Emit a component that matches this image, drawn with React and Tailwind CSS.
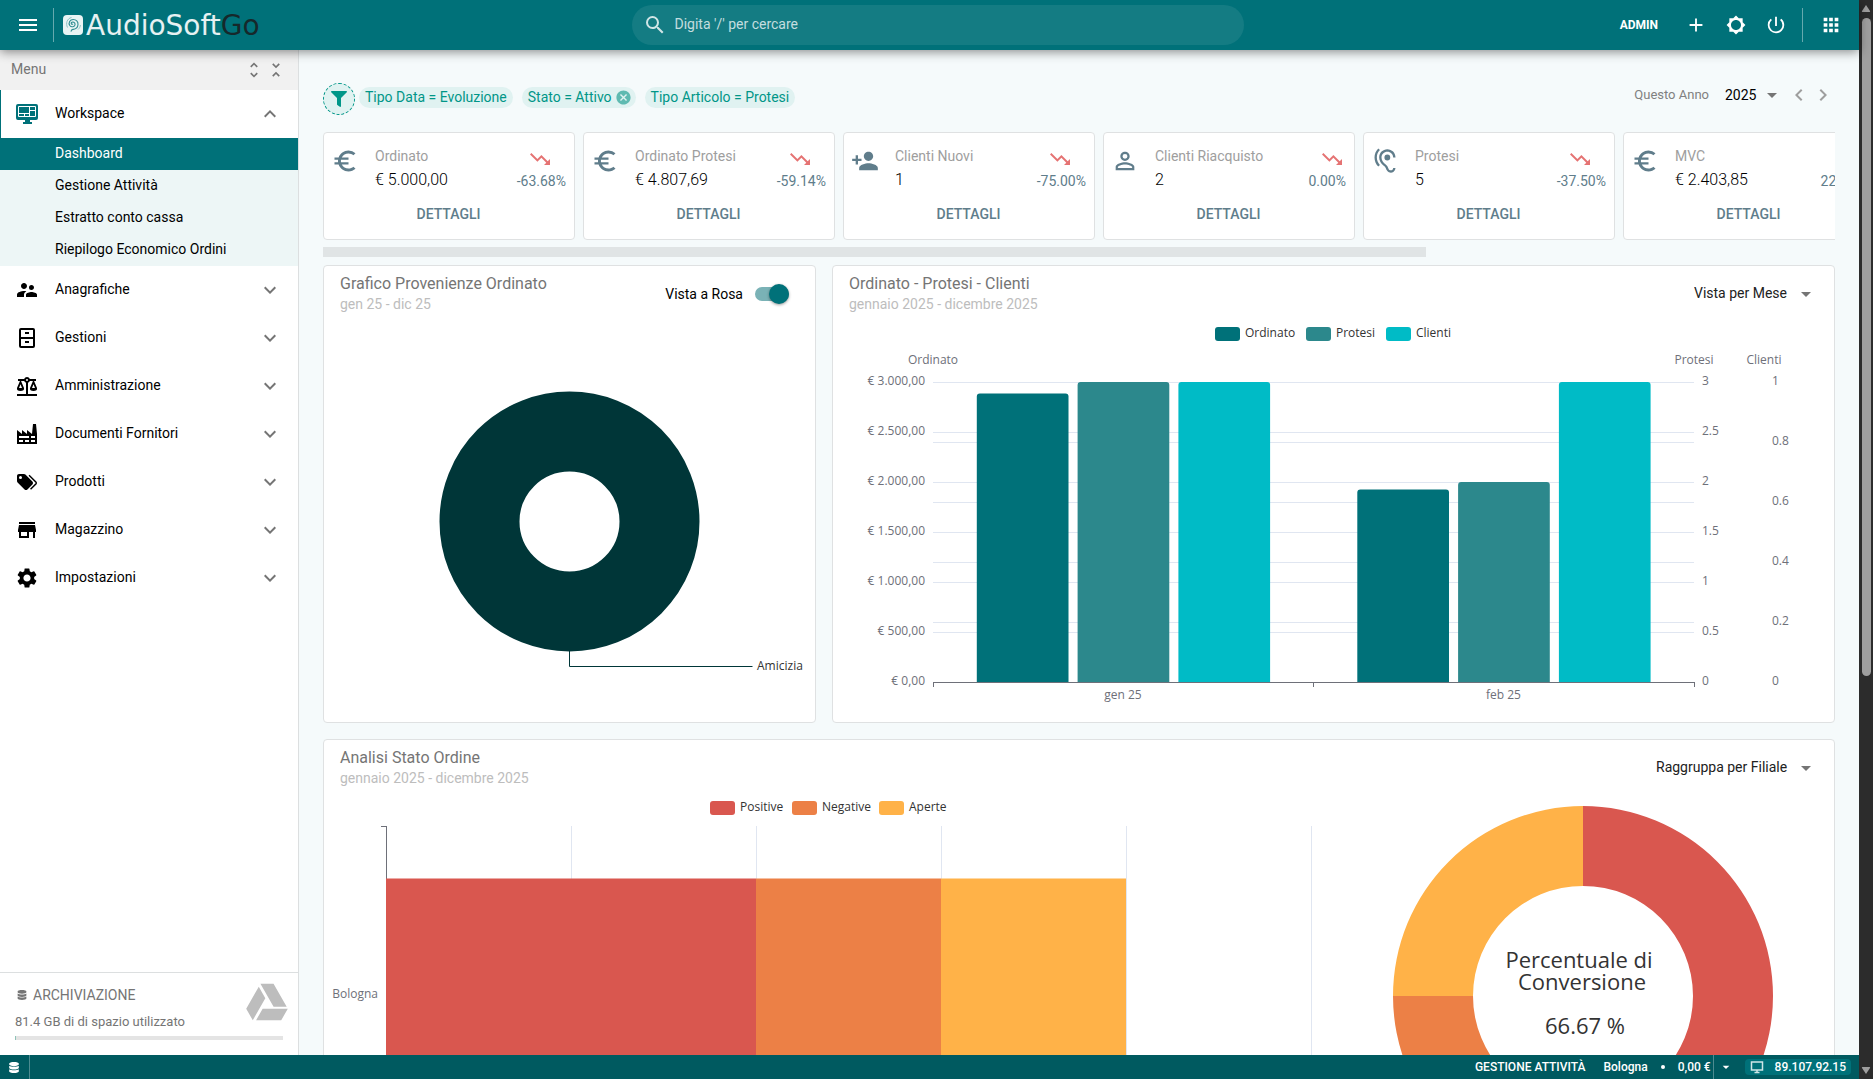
import React from 'react'
import {
  MdMenu, MdSearch, MdAdd, MdBrightness5, MdPowerSettingsNew, MdApps, MdUnfoldMore, MdUnfoldLess,
  MdExpandMore, MdExpandLess, MdSupervisorAccount, MdStore, MdSettings, MdCancel, MdArrowDropDown,
  MdChevronLeft, MdChevronRight, MdEuroSymbol, MdPersonAdd, MdPersonOutline, MdHearing,
  MdTrendingDown, MdTrendingUp
} from 'react-icons/md'
import { FaDatabase, FaFilter } from 'react-icons/fa'

const chartFont = { fontFamily: '"Open Sans", "Noto Sans", sans-serif' }

const Glyph = ({ d, className }) => (
  <svg viewBox="0 0 24 24" className={className} fill="currentColor" aria-hidden="true">
    <path d={d} />
  </svg>
)

const MonitorIcon = ({ className }) => (
  <svg viewBox="0 0 24 24" className={className} aria-hidden="true">
    <path d="M3 2h18a2 2 0 0 1 2 2v12a2 2 0 0 1-2 2h-6v2h2v2H8v-2h2v-2H3a2 2 0 0 1-2-2V4a2 2 0 0 1 2-2z" fill="#007179" />
    <path d="M3.500 4.500h17v10h-17zM3.500 11.500h11M9.500 11.500v3M14.500 4.500v10M14.500 8.500h6" fill="none" stroke="#fff" />
  </svg>
)

const CabinetIcon = props => (
  <Glyph {...props} d="M14 8h-4V6h4v2zm6-4v16a2 2 0 0 1-2 2H6a2 2 0 0 1-2-2V4a2 2 0 0 1 2-2h12a2 2 0 0 1 2 2zm-2 9H6v7h12v-7zm0-9H6v7h12V4zm-4 11h-4v2h4v-2z" />
)
const ScaleIcon = props => (
  <Glyph {...props} d="M12,3C10.73,3 9.6,3.8 9.18,5H3V7H4.95L2,14C1.53,16 3,17 5.5,17C8,17 9.56,16 9,14L6.05,7H9.17C9.5,7.85 10.15,8.5 11,8.83V20H2V22H22V20H13V8.82C13.85,8.5 14.5,7.85 14.82,7H17.95L15,14C14.53,16 16,17 18.5,17C21,17 22.56,16 22,14L19.05,7H21V5H14.83C14.4,3.8 13.27,3 12,3M12,5A1,1 0 0,1 13,6A1,1 0 0,1 12,7A1,1 0 0,1 11,6A1,1 0 0,1 12,5M5.5,10.25L7,14H4L5.5,10.25M18.5,10.25L20,14H17L18.5,10.25Z" />
)
const FactoryIcon = props => (
  <Glyph {...props} d="M4,18V20H8V18H4M4,14V16H14V14H4M10,18V20H14V18H10M16,14V16H20V14H16M16,18V20H20V18H16M2,22V8L7,12V8L12,12V8L17,12L18,2H21L22,12V22H2Z" />
)
const TagsIcon = props => (
  <Glyph {...props} d="M5.5,9A1.5,1.5 0 0,0 7,7.5A1.5,1.5 0 0,0 5.5,6A1.5,1.5 0 0,0 4,7.5A1.5,1.5 0 0,0 5.5,9M17.41,11.58C17.77,11.94 18,12.44 18,13C18,13.55 17.78,14.05 17.41,14.41L12.41,19.41C12.05,19.77 11.55,20 11,20C10.45,20 9.95,19.78 9.58,19.41L2.59,12.42C2.22,12.05 2,11.55 2,11V6C2,4.89 2.89,4 4,4H9C9.55,4 10.05,4.22 10.41,4.58L17.41,11.58M13.54,5.71L14.54,4.71L21.41,11.58C21.78,11.94 22,12.45 22,13C22,13.55 21.78,14.05 21.42,14.41L16.04,19.79L15.04,18.79L20.75,13L13.54,5.71Z" />
)

const workspaceLinks = ['Dashboard', 'Gestione Attività', 'Estratto conto cassa', 'Riepilogo Economico Ordini']

const sections = [
  { label: 'Anagrafiche', icon: MdSupervisorAccount },
  { label: 'Gestioni', icon: CabinetIcon },
  { label: 'Amministrazione', icon: ScaleIcon },
  { label: 'Documenti Fornitori', icon: FactoryIcon },
  { label: 'Prodotti', icon: TagsIcon },
  { label: 'Magazzino', icon: MdStore },
  { label: 'Impostazioni', icon: MdSettings }
]

const metrics = [
  { label: 'Ordinato', value: '€ 5.000,00', change: '-63.68%', icon: MdEuroSymbol },
  { label: 'Ordinato Protesi', value: '€ 4.807,69', change: '-59.14%', icon: MdEuroSymbol },
  { label: 'Clienti Nuovi', value: '1', change: '-75.00%', icon: MdPersonAdd },
  { label: 'Clienti Riacquisto', value: '2', change: '0.00%', icon: MdPersonOutline },
  { label: 'Protesi', value: '5', change: '-37.50%', icon: MdHearing },
  { label: 'MVC', value: '€ 2.403,85', change: '22.00%', icon: MdEuroSymbol, up: true }
]

const Logo = () => (
  <a href="#" className="ml-[9px] flex items-center" aria-label="AudioSoftGo">
    <svg viewBox="0 0 20 20" className="h-5 w-5" aria-hidden="true">
      <rect width="20" height="20" rx="4" fill="#e8f4f4" />
      <path d="M10 9a1 1 0 1 1-1.500-1.500c1.200-1.200 3.600-.2 3.600 1.800 0 2.600-3.800 3.400-5.300 1.200C5 7.600 7 4.500 10.200 4.500c3 0 5 2.200 4.800 5-.2 3-2.400 4.600-4.800 4.900-1.500.2-2.200 1-2 2.300" fill="none" stroke="#2f8d92" strokeWidth="1.100" />
      <path d="M4.500 12.500C2.500 8.500 4 3.500 8.500 2.500M15 14.500c1.500-1.200 2.300-2.800 2.400-4.500" fill="none" stroke="#8fc3c6" />
    </svg>
    <span className="ml-[3px] pt-0.5 font-['DejaVu_Sans',sans-serif] text-[28px] leading-8 text-white/90">
      AudioSoft<span className="text-[#16282b]">Go</span>
    </span>
  </a>
)

const Header = () => (
  <header className="relative z-10 flex h-[50px] shrink-0 items-center bg-[#007179] text-white shadow-[0_2px_10px_rgba(0,0,0,0.45)]">
    <div className="flex flex-1 items-center">
      <button aria-label="Apri menu" className="ml-4"><MdMenu className="h-6 w-6" /></button>
      <span className="ml-[13px] h-[34px] w-px bg-white/40" />
      <Logo />
    </div>
    <label className="ml-8 flex h-10 w-[612px] shrink items-center gap-2 rounded-full bg-white/[0.08] px-[11px]">
      <MdSearch className="h-6 w-6 shrink-0 text-white/80" />
      <input type="search" aria-label="Cerca" placeholder="Digita '/' per cercare" className="w-full bg-transparent pb-0.5 text-sm outline-none placeholder:text-white/75" />
    </label>
    <div className="flex flex-1 items-center justify-end pr-4">
      <button className="mr-[26px] text-xs font-bold">ADMIN</button>
      <div className="flex items-center gap-4">
        <button aria-label="Aggiungi"><MdAdd className="h-[22px] w-6" /></button>
        <button aria-label="Tema" className="flex h-6 w-6 items-center justify-center"><MdBrightness5 className="h-5 w-5" /></button>
        <button aria-label="Esci"><MdPowerSettingsNew className="h-[22px] w-6" /></button>
      </div>
      <span className="ml-[14px] h-[34px] w-px bg-white/40" />
      <button aria-label="Applicazioni" className="ml-4"><MdApps className="h-[22px] w-6" /></button>
    </div>
  </header>
)

const Sidebar = () => (
  <aside className="flex w-[299px] shrink-0 flex-col border-r border-[#dcdfe0] bg-white text-sm text-black">
    <div className="flex h-10 items-center bg-[#f1f1f1] pr-3 pl-[11px] text-[#757575]">
      <span className="flex-1 pb-0.5">Menu</span>
      <button aria-label="Espandi tutto"><MdUnfoldMore className="h-5 w-5" /></button>
      <button aria-label="Comprimi tutto" className="ml-0.5"><MdUnfoldLess className="h-5 w-5" /></button>
    </div>
    <nav className="flex-1">
      <button className="flex h-12 w-full items-center border-l border-[#007179] pr-4 pl-[14px]">
        <MonitorIcon className="h-6 w-6" />
        <span className="ml-4 flex-1 pb-0.5 text-left">Workspace</span>
        <MdExpandLess className="h-6 w-6 text-[#757575]" />
      </button>
      <div className="bg-[#edf6f6]">
        {workspaceLinks.map((label, i) => (
          <a key={label} href="#" className={i === 0 ? 'flex h-8 items-center bg-[#007179] pb-0.5 pl-[55px] text-white' : 'flex h-8 items-center pb-0.5 pl-[55px]'}>
            {label}
          </a>
        ))}
      </div>
      {sections.map(section => (
        <button key={section.label} className="flex h-12 w-full items-center pr-4 pl-[15px]">
          <section.icon className="h-6 w-6" />
          <span className="ml-4 flex-1 pb-0.5 text-left">{section.label}</span>
          <MdExpandMore className="h-6 w-6 text-[#757575]" />
        </button>
      ))}
    </nav>
    <div className="h-[83px] border-t border-[#dcdfe0] px-[15px] pt-2 text-[#757575]">
      <div className="flex justify-between">
        <div>
          <div className="flex h-7 items-center">
            <FaDatabase className="ml-0.5 h-[10px] w-[10px]" />
            <span className="ml-1.5">ARCHIVIAZIONE</span>
          </div>
          <p className="mt-[3px] text-[13px] leading-5">81.4 GB di di spazio utilizzato</p>
        </div>
        <Glyph className="-mt-px -mr-[7px] h-[46px] w-[46px] text-[#bdbdbd]" d="M7.71,3.5L1.15,15L4.58,21L11.13,9.5M9.73,15L6.3,21H19.42L22.85,15M22.28,14L15.42,2H8.58L8.57,2L15.43,14H22.28Z" />
      </div>
      <div className="mt-1 h-1 bg-[#e4e4e4]"><div className="h-1 w-px bg-[#8fc3b8]" /></div>
    </div>
  </aside>
)

const Chip = ({ children, removable }) => (
  <span className="flex h-[21px] items-center rounded-full bg-[#e0f2f1] px-1.5 pb-px text-sm text-[#009688]">
    {children}
    {removable && <button aria-label="Rimuovi filtro" className="-mr-0.5 ml-[3px]"><MdCancel className="h-[17px] w-[17px] text-[#5fbab1]" /></button>}
  </span>
)

const Filters = () => (
  <div className="flex h-8 items-start">
    <button aria-label="Filtri" className="flex h-8 w-8 items-center justify-center rounded-full border border-dashed border-[#009688] bg-[#e0f2f1] text-[#009688]">
      <FaFilter className="h-4 w-4" />
    </button>
    <div className="mt-1 ml-1 flex gap-[9px]">
      <Chip>Tipo Data = Evoluzione</Chip>
      <Chip removable>Stato = Attivo</Chip>
      <Chip>Tipo Articolo = Protesi</Chip>
    </div>
    <div className="ml-auto flex h-6 items-center text-[#9e9e9e]">
      <label htmlFor="year" className="text-[13px] text-[#808080]">Questo Anno</label>
      <div className="relative ml-4 flex items-center">
        <select id="year" className="appearance-none bg-transparent pr-[22px] pb-px text-sm text-black">
          <option>2025</option>
        </select>
        <MdArrowDropDown className="pointer-events-none absolute -right-[5px] h-6 w-6 text-[#757575]" />
      </div>
      <button aria-label="Precedente" className="ml-2"><MdChevronLeft className="h-6 w-6" /></button>
      <button aria-label="Successivo"><MdChevronRight className="h-6 w-6" /></button>
    </div>
  </div>
)

const trendStyle = metric => {
  if (metric.up) return 'mt-[3px] mr-2 h-6 w-6 text-[#4caf50]'
  if (metric.change === '0.00%') return 'mt-[3px] mr-0.5 h-6 w-6 text-[#e57373]'
  return 'mt-[3px] mr-3.5 h-6 w-6 text-[#e57373]'
}

const MetricCard = ({ metric }) => {
  const Trend = metric.up ? MdTrendingUp : MdTrendingDown
  return (
    <div className="h-[108px] w-[252px] shrink-0 rounded border border-[#dfe1e2] bg-white pt-[11px] pr-2 pl-[7px] text-sm text-[#607d8b]">
      <div className="flex">
        <metric.icon className="mt-[3px] h-7 w-7" />
        <div className="ml-4 flex-1">
          <p className="leading-6 text-[#9e9e9e]">{metric.label}</p>
          <p className="text-base leading-6 font-light text-black">{metric.value}</p>
        </div>
        <div className="flex flex-col items-end">
          <Trend className={trendStyle(metric)} />
          <span className="leading-5">{metric.change}</span>
        </div>
      </div>
      <button className="mt-[10px] block w-full text-center leading-6 font-medium">DETTAGLI</button>
    </div>
  )
}

const Panel = ({ title, subtitle, action, children }) => (
  <section className="rounded border border-[#dfe1e2] bg-white">
    <div className="flex h-[60px] justify-between pl-4">
      <div className="pt-2">
        <h2 className="text-base leading-5 text-[#757575]">{title}</h2>
        <p className="text-sm leading-5 text-[#bdbdbd]">{subtitle}</p>
      </div>
      <div className="flex h-14 items-center text-sm">{action}</div>
    </div>
    {children}
  </section>
)

const PanelSelect = ({ label }) => (
  <div className="relative mr-4 flex items-center">
    <select aria-label={label} className="appearance-none bg-transparent pr-[30px] pb-0.5 text-sm text-[#212121]">
      <option>{label}</option>
    </select>
    <MdArrowDropDown className="pointer-events-none absolute right-0 h-6 w-6 text-[#757575]" />
  </div>
)

const Legend = ({ items }) => (
  <g fontSize="12" fill="#333">
    {items.map(item => (
      <g key={item.name}>
        <rect x={item.x} y="1" width="25" height="14" rx="3" fill={item.color} />
        <text x={item.x + 30} y="11">{item.name}</text>
      </g>
    ))}
  </g>
)

const SourceChart = () => (
  <svg viewBox="0 0 491 396" className="block h-[396px] w-full overflow-visible" style={chartFont}>
    <circle cx="245.500" cy="195.500" r="90" fill="none" stroke="#003638" strokeWidth="80" />
    <path d="M245.500 325V340.500H428.500" fill="none" stroke="#003638" strokeWidth="1" />
    <text x="433" y="344" fontSize="12" fill="#333">Amicizia</text>
  </svg>
)

const months = [
  { label: 'gen 25', values: [288.5, 300, 300] },
  { label: 'feb 25', values: [192.5, 200, 300] }
]
const seriesColors = ['#007179', '#2c888c', '#00bbc6']
const euroTicks = ['€ 0,00', '€ 500,00', '€ 1.000,00', '€ 1.500,00', '€ 2.000,00', '€ 2.500,00', '€ 3.000,00']
const protesiTicks = ['0', '0.5', '1', '1.5', '2', '2.5', '3']
const clientiTicks = ['0', '0.2', '0.4', '0.6', '0.8', '1']

const OrdersChart = () => {
  const base = 356
  const band = 380.5
  return (
    <svg viewBox="0 0 1001 396" className="block h-[396px] w-full overflow-visible" style={chartFont}>
      <Legend items={[
        { name: 'Ordinato', x: 382, color: seriesColors[0] },
        { name: 'Protesi', x: 473, color: seriesColors[1] },
        { name: 'Clienti', x: 553, color: seriesColors[2] }
      ]} />
      <g stroke="#e0e6f1" shapeRendering="crispEdges">
        {euroTicks.slice(1).map((t, i) => <path key={t} d={`M100 ${base - (i + 1) * 50 + 0.5}H861`} />)}
        {clientiTicks.slice(1).map((t, i) => <path key={t} d={`M100 ${base - (i + 1) * 60 + 0.5}H861`} />)}
      </g>
      {months.map((month, m) => month.values.map((v, i) => (
        <path
          key={month.label + i}
          fill={seriesColors[i]}
          d={`M${143.8 + band * m + 100.8 * i} ${base}v${3 - v}q0 -3 3 -3h85.700q3 0 3 3v${v - 3}z`}
        />
      )))}
      <path d="M100.500 361v-4.500H861.500v4.500M480.500 356.500v4.500" fill="none" stroke="#6e7079" shapeRendering="crispEdges" />
      <g fontSize="12" fill="#6e7079">
        <g textAnchor="middle">
          <text x="100" y="38">Ordinato</text>
          <text x="861" y="38">Protesi</text>
          <text x="931" y="38">Clienti</text>
          {months.map((month, m) => <text key={month.label} x={290 + band * m} y="373">{month.label}</text>)}
        </g>
        {euroTicks.map((t, i) => <text key={t} x="92" y={base - i * 50 + 3} textAnchor="end">{t}</text>)}
        {protesiTicks.map((t, i) => <text key={t} x="869" y={base - i * 50 + 3}>{t}</text>)}
        {clientiTicks.map((t, i) => <text key={t} x="939" y={base - i * 60 + 3}>{t}</text>)}
      </g>
    </svg>
  )
}

const StatusChart = () => (
  <svg viewBox="0 0 1007 396" className="block h-[396px] w-full overflow-visible" style={chartFont}>
    <Legend items={[
      { name: 'Positive', x: 386, color: '#d9574f' },
      { name: 'Negative', x: 468, color: '#ec8046' },
      { name: 'Aperte', x: 555, color: '#ffb248' }
    ]} />
    <g stroke="#e0e6f1" shapeRendering="crispEdges">
      {[1, 2, 3, 4, 5].map(i => <path key={i} d={`M${62.5 + i * 185} 26V366`} />)}
    </g>
    <path d="M57 26.500h5.500V366" fill="none" stroke="#6e7079" shapeRendering="crispEdges" />
    <rect x="62" y="78.500" width="370" height="235" fill="#d9574f" />
    <rect x="432" y="78.500" width="185" height="235" fill="#ec8046" />
    <rect x="617" y="78.500" width="185" height="235" fill="#ffb248" />
    <text x="54" y="198" fontSize="12" fill="#6e7079" textAnchor="end">Bologna</text>
  </svg>
)

const ConversionChart = () => (
  <svg viewBox="0 0 503 396" className="block h-[396px] w-full overflow-visible" style={chartFont}>
    <path d="M252 6a190 190 0 0 1 0 380v-80a110 110 0 0 0 0 -220z" fill="#d9574f" />
    <path d="M252 386a190 190 0 0 1 -190 -190h80a110 110 0 0 0 110 110z" fill="#ec8046" />
    <path d="M62 196a190 190 0 0 1 190 -190v80a110 110 0 0 0 -110 110z" fill="#ffb248" />
    <g fontSize="22" fill="#333" textAnchor="middle">
      <text x="248" y="168">Percentuale di</text>
      <text x="251" y="190">Conversione</text>
      <text x="254" y="234">66.67 %</text>
    </g>
  </svg>
)

const Footer = () => (
  <footer className="flex h-6 shrink-0 items-center bg-[#005a60] text-xs font-medium text-white">
    <button aria-label="Archivio" className="flex h-full w-[30px] items-center border-r border-white/30 pl-[9px]">
      <FaDatabase className="h-[11px] w-[10px]" />
    </button>
    <div className="ml-auto flex h-full items-center pr-2">
      <span>GESTIONE ATTIVITÀ</span>
      <span className="ml-[18px]">Bologna</span>
      <span className="mx-[13px] h-1 w-1 rounded-full bg-white" />
      <span>0,00 €</span>
      <button aria-label="Cassa" className="ml-0.5 flex h-full items-center border-l border-white/30 px-1"><MdArrowDropDown className="h-4 w-4" /></button>
      <span className="ml-[7px] flex h-4 items-center rounded bg-[#007179] px-[5px]">
        <svg viewBox="0 0 14 14" className="h-[14px] w-[14px]" fill="none" stroke="#cfe6e7" strokeWidth="1.500" aria-hidden="true">
          <path d="M1.500 2h11v8h-11zM4.500 12.500h5M7 10v2" />
        </svg>
        <span className="ml-[11px]">89.107.92.15</span>
      </span>
    </div>
  </footer>
)

// Page scroll bar, drawn for the dark theme of the host window
const ScrollBar = () => (
  <div className="flex w-3.5 shrink-0 flex-col items-center bg-[#2c2c2c]">
    <svg viewBox="0 0 10 8" className="mt-[5px] h-2 w-[10px]" fill="#9f9f9f"><path d="M5 0l4 6q.5 1-.5 1h-7q-1 0-.5-1z" /></svg>
    <div className="mt-[5px] h-[61%] w-[9px] rounded-full bg-[#9f9f9f]" />
    <svg viewBox="0 0 10 8" className="mt-auto mb-[5px] h-2 w-[10px]" fill="#9f9f9f"><path d="M5 8l4-6q.5-1-.5-1h-7q-1 0-.5 1z" /></svg>
  </div>
)

export default function App() {
  const scrollRatio = 1512 / 2072

  return (
    <div className="flex h-screen overflow-hidden font-[Roboto,sans-serif]">
      <div className="flex min-w-0 flex-1 flex-col">
        <Header />
        <div className="flex min-h-0 flex-1">
          <Sidebar />
          <main className="min-w-0 flex-1 overflow-hidden bg-[#f5fafb] px-6 pt-[33px]">
            <Filters />
            <div className="mt-[17px] flex gap-2 overflow-hidden">
              {metrics.map(metric => <MetricCard key={metric.label} metric={metric} />)}
            </div>
            <div className="mt-[7px] h-[10px] bg-[#e0e4e5]" style={{ width: `${scrollRatio * 100}%` }} />
            <div className="mt-2 grid grid-cols-[493fr_1003fr] gap-4">
              <Panel
                title="Grafico Provenienze Ordinato"
                subtitle="gen 25 - dic 25"
                action={
                  <label className="mr-[26px] flex items-center gap-3 text-black">
                    Vista a Rosa
                    <input type="checkbox" role="switch" defaultChecked className="relative h-[14px] w-[34px] appearance-none rounded-full bg-[#7ab2b6] before:absolute before:-top-[3px] before:right-0 before:h-5 before:w-5 before:rounded-full before:bg-[#007179] before:shadow-[0_1px_3px_rgba(0,0,0,0.4)] before:content-['']" />
                  </label>
                }
              >
                <SourceChart />
              </Panel>
              <Panel title="Ordinato - Protesi - Clienti" subtitle="gennaio 2025 - dicembre 2025" action={<PanelSelect label="Vista per Mese" />}>
                <OrdersChart />
              </Panel>
              <div className="col-span-2">
                <Panel title="Analisi Stato Ordine" subtitle="gennaio 2025 - dicembre 2025" action={<PanelSelect label="Raggruppa per Filiale" />}>
                  <div className="grid grid-cols-[1007fr_503fr]">
                    <StatusChart />
                    <ConversionChart />
                  </div>
                </Panel>
              </div>
            </div>
          </main>
        </div>
        <Footer />
      </div>
      <ScrollBar />
    </div>
  )
}
